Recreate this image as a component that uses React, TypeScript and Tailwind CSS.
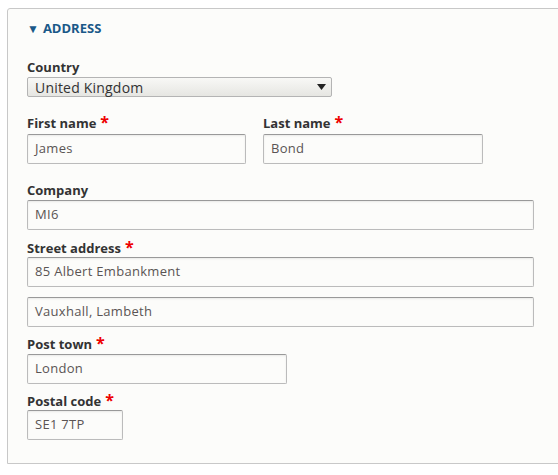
import React from "react"

const font = { fontFamily: '"Open Sans", "Noto Sans", sans-serif' }

function Label({ text, required }: { text: string; required?: boolean }) {
  return (
    <div className="h-[18px] text-[13px] leading-[18px] font-bold text-[#333]">
      {text}
      {required && <span className="ml-[4px] text-[#e00] text-[16px]">*</span>}
    </div>
  )
}

function Input({ value, w }: { value: string; w: string }) {
  return (
    <div
      className={`${w} h-[30px] border border-[#bbb] border-t-[#999] bg-[#fcfcfa] shadow-[inset_0_1px_2px_rgba(0,0,0,0.08)] rounded-[2px] px-[7px] flex items-center text-[13px] text-[#5a5454] tracking-[0.3px]`}
    >
      {value}
    </div>
  )
}

export default function App() {
  return (
    <div className="w-[558px] h-[475px] overflow-hidden bg-white" style={font}>
      <div className="ml-[7px] mt-[8px] w-[570px] h-[456px] border border-[#c8c8c8] rounded-tl-[3px] bg-[#fcfcfa] pl-[19px] pt-[11px]">
        <div className="h-[18px] flex items-center text-[13px] font-bold text-[#1a5888] uppercase">
          <span className="text-[12px] mr-[4px] leading-none">▼</span>
          Address
        </div>

        <div className="mt-[20px]">
          <Label text="Country" />
          <div className="mt-[1px] w-[305px] h-[20px] border border-[#b4b4b4] rounded-[2px] bg-gradient-to-b from-[#f8f8f6] to-[#e6e6e2] flex items-center justify-between pl-[7px] pr-[5px] text-[14px] text-[#333] tracking-[0.2px]">
            <span>United Kingdom</span>
            <svg width="9" height="6" viewBox="0 0 9 6">
              <path d="M0 0 H9 L4.5 6 Z" fill="#222" />
            </svg>
          </div>
        </div>

        <div className="mt-[16px] flex gap-[17px]">
          <div>
            <Label text="First name" required />
            <div className="mt-[3px]">
              <Input value="James" w="w-[219px]" />
            </div>
          </div>
          <div>
            <Label text="Last name" required />
            <div className="mt-[3px]">
              <Input value="Bond" w="w-[220px]" />
            </div>
          </div>
        </div>

        <div className="mt-[17px]">
          <Label text="Company" />
          <div className="mt-[1px]">
            <Input value="MI6" w="w-[507px]" />
          </div>
        </div>

        <div className="mt-[8px]">
          <Label text="Street address" required />
          <div className="mt-[1px]">
            <Input value="85 Albert Embankment" w="w-[507px]" />
          </div>
          <div className="mt-[10px]">
            <Input value="Vauxhall, Lambeth" w="w-[507px]" />
          </div>
        </div>

        <div className="mt-[7px]">
          <Label text="Post town" required />
          <div className="mt-[2px]">
            <Input value="London" w="w-[260px]" />
          </div>
        </div>

        <div className="mt-[7px]">
          <Label text="Postal code" required />
          <div className="mt-[1px]">
            <Input value="SE1 7TP" w="w-[96px]" />
          </div>
        </div>
      </div>
    </div>
  )
}
